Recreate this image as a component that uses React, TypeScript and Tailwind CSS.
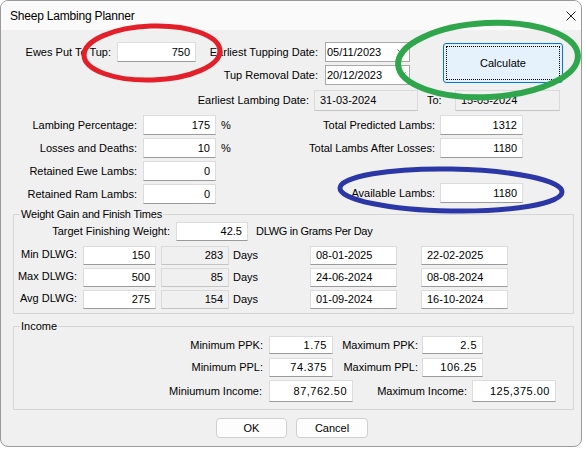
import React from "react";

const TB =
  "flex items-center justify-end pr-[5px] bg-white border border-[#dcdcdc] border-b-[#9a9a9a] text-[11px] leading-none shrink-0";
const TBL =
  "flex items-center justify-start pl-[5px] bg-white border border-[#dcdcdc] border-b-[#9a9a9a] text-[11px] leading-none shrink-0";
const GB =
  "flex items-center justify-end pr-[5px] bg-[#f0f0f0] border border-[#dadada] border-b-[#c4c4c4] text-[11px] leading-none shrink-0";
const GBL =
  "flex items-center justify-start pl-[5px] bg-[#f0f0f0] border border-[#dadada] border-b-[#c4c4c4] text-[11px] leading-none shrink-0";
const LB = "text-right text-[11px] leading-none shrink-0 whitespace-nowrap";

function DateBox({ value }: { value: string }) {
  return (
    <div className="ml-[7px] w-[85px] h-[20px] shrink-0 bg-white border border-[#a8a8a8] flex items-center justify-between pl-[1px] pr-[3px] text-[11px] leading-none">
      <span>{value}</span>
      <svg width="9" height="6" viewBox="0 0 9 6">
        <path d="M0.5 0.5 L4.5 4.5 L8.5 0.5" fill="none" stroke="#555" strokeWidth="1" />
      </svg>
    </div>
  );
}

function DlwgRow({
  label,
  v,
  days,
  d1,
  d2,
  first,
}: {
  label: string;
  v: string;
  days: string;
  d1: string;
  d2: string;
  first?: boolean;
}) {
  return (
    <div className={first ? "flex items-center h-[19px] mt-[5px]" : "flex items-center h-[19px] mt-[3px]"}>
      <span className={`${LB} w-[63px] -mt-[2px]`}>{label}</span>
      <div className={`${TB} ml-[6px] w-[73px] h-[19px]`}>{v}</div>
      <div className={`${GB} ml-[5px] w-[68px] h-[19px]`}>{days}</div>
      <span className="ml-[4px] w-[77px] shrink-0 text-[11px] leading-none">Days</span>
      <div className={`${TBL} w-[87px] h-[19px]`}>{d1}</div>
      <div className={`${TBL} ml-[24px] w-[87px] h-[19px]`}>{d2}</div>
    </div>
  );
}

export default function App() {
  return (
    <div className="w-[586px] h-[450px] bg-white font-['Liberation_Sans',Arial,sans-serif] text-black relative overflow-hidden">
      <div className="w-[582px] h-[447px] bg-[#f0f0f0] border border-[#9a9a9a] rounded-[8px] overflow-hidden flex flex-col">
        {/* Title bar */}
        <div className="h-[29px] shrink-0 bg-[#fafafa] flex items-center justify-between pl-[9px] pr-[5px]">
          <span className="text-[12px] leading-none tracking-[-0.2px]">Sheep Lambing Planner</span>
          <svg width="10" height="10" viewBox="0 0 10 10">
            <path d="M0.5 0.5 L9.5 9.5 M9.5 0.5 L0.5 9.5" stroke="#222" strokeWidth="1" />
          </svg>
        </div>

        {/* Rows A/B + Calculate */}
        <div className="flex mt-[12px]">
          <div className="flex flex-col w-[409px] shrink-0">
            <div className="flex items-center h-[20px]">
              <span className={`${LB} w-[110px]`}>Ewes Put To Tup:</span>
              <div className={`${TB} ml-[6px] w-[79px] h-[20px]`}>750</div>
              <span className={`${LB} w-[122px]`}>Earliest Tupping Date:</span>
              <DateBox value="05/11/2023" />
            </div>
            <div className="flex items-center h-[20px] mt-[3px]">
              <span className={`${LB} w-[317px]`}>Tup Removal Date:</span>
              <DateBox value="20/12/2023" />
            </div>
          </div>
          <button className="ml-[33px] mt-[1px] w-[120px] h-[40px] shrink-0 rounded-[3px] bg-[#e5f1fb] border border-[#0078d4] outline-1 outline-dotted outline-black outline-offset-[-4px] text-[11px] leading-none">
            Calculate
          </button>
        </div>

        {/* Row C */}
        <div className="flex items-center h-[21px] mt-[5px]">
          <span className={`${LB} w-[308px]`}>Earliest Lambing Date:</span>
          <div className={`${GBL} ml-[5px] w-[104px] h-[21px]`}>31-03-2024</div>
          <span className="ml-[9px] w-[28px] shrink-0 text-[11px] leading-none">To:</span>
          <div className={`${GBL} w-[105px] h-[21px]`}>15-05-2024</div>
        </div>

        {/* Rows D-G */}
        <div className="flex mt-[4px]">
          <div className="flex flex-col gap-[3px] w-[249px] shrink-0">
            <div className="flex items-center h-[20px]">
              <span className={`${LB} w-[136px]`}>Lambing Percentage:</span>
              <div className={`${TB} ml-[6px] w-[73px] h-[20px]`}>175</div>
              <span className="ml-[5px] text-[11px] leading-none">%</span>
            </div>
            <div className="flex items-center h-[20px]">
              <span className={`${LB} w-[136px]`}>Losses and Deaths:</span>
              <div className={`${TB} ml-[6px] w-[73px] h-[20px]`}>10</div>
              <span className="ml-[5px] text-[11px] leading-none">%</span>
            </div>
            <div className="flex items-center h-[20px]">
              <span className={`${LB} w-[136px]`}>Retained Ewe Lambs:</span>
              <div className={`${TB} ml-[6px] w-[73px] h-[20px]`}>0</div>
            </div>
            <div className="flex items-center h-[20px]">
              <span className={`${LB} w-[136px]`}>Retained Ram Lambs:</span>
              <div className={`${TB} ml-[6px] w-[73px] h-[20px]`}>0</div>
            </div>
          </div>
          <div className="flex flex-col">
            <div className="flex items-center h-[20px]">
              <span className={`${LB} w-[185px]`}>Total Predicted Lambs:</span>
              <div className={`${TB} ml-[5px] w-[83px] h-[20px]`}>1312</div>
            </div>
            <div className="flex items-center h-[20px] mt-[3px]">
              <span className={`${LB} w-[185px]`}>Total Lambs After Losses:</span>
              <div className={`${TB} ml-[5px] w-[83px] h-[20px]`}>1180</div>
            </div>
            <div className="flex items-center h-[20px] mt-[25px]">
              <span className={`${LB} w-[185px]`}>Available Lambs:</span>
              <div className={`${TB} ml-[5px] w-[83px] h-[20px]`}>1180</div>
            </div>
          </div>
        </div>

        {/* Weight Gain group */}
        <div className="mt-[10px] ml-[12px] w-[561px] h-[100px] shrink-0 border border-[#d6d6d6] flex flex-col">
          <span className="-mt-[8px] ml-[6px] px-[1px] self-start bg-[#f0f0f0] text-[11px] leading-[14px] tracking-[-0.2px]">
            Weight Gain and Finish Times
          </span>
          <div className="flex items-center h-[19px] mt-[1px]">
            <span className={`${LB} w-[156px]`}>Target Finishing Weight:</span>
            <div className={`${TB} ml-[6px] w-[72px] h-[19px]`}>42.5</div>
            <span className="ml-[8px] text-[11px] leading-none tracking-[-0.3px]">DLWG in Grams Per Day</span>
          </div>
          <DlwgRow first label="Min DLWG:" v="150" days="283" d1="08-01-2025" d2="22-02-2025" />
          <DlwgRow label="Max DLWG:" v="500" days="85" d1="24-06-2024" d2="08-08-2024" />
          <DlwgRow label="Avg DLWG:" v="275" days="154" d1="01-09-2024" d2="16-10-2024" />
        </div>

        {/* Income group */}
        <div className="mt-[12px] ml-[12px] w-[561px] h-[84px] shrink-0 border border-[#d6d6d6] flex flex-col">
          <span className="-mt-[8px] ml-[6px] px-[1px] self-start bg-[#f0f0f0] text-[11px] leading-[14px]">
            Income
          </span>
          <div className="flex items-center h-[18px] mt-[3px]">
            <span className={`${LB} w-[249px]`}>Minimum PPK:</span>
            <div className={`${TB} ml-[6px] w-[64px] h-[18px] tracking-[0.5px]`}>1.75</div>
            <span className={`${LB} w-[85px]`}>Maximum PPK:</span>
            <div className={`${TB} ml-[4px] w-[61px] h-[18px] tracking-[0.5px]`}>2.5</div>
          </div>
          <div className="flex items-center h-[19px] mt-[4px]">
            <span className={`${LB} w-[249px]`}>Minimum PPL:</span>
            <div className={`${TB} ml-[6px] w-[64px] h-[19px] tracking-[0.5px]`}>74.375</div>
            <span className={`${LB} w-[85px]`}>Maximum PPL:</span>
            <div className={`${TB} ml-[4px] w-[61px] h-[19px] tracking-[0.5px]`}>106.25</div>
          </div>
          <div className="flex items-center h-[22px] mt-[3px]">
            <span className={`${LB} w-[248px]`}>Miniumum Income:</span>
            <div className={`${TB} ml-[7px] w-[84px] h-[22px] tracking-[0.5px]`}>87,762.50</div>
            <span className={`${LB} w-[114px]`}>Maximum Income:</span>
            <div className={`${TB} ml-[5px] w-[84px] h-[22px] tracking-[0.5px]`}>125,375.00</div>
          </div>
        </div>

        {/* Buttons */}
        <div className="flex mt-[8px]">
          <button className="ml-[215px] w-[71px] h-[20px] rounded-[4px] border border-[#d0d0d0] bg-[#fdfdfd] text-[11px] leading-none">
            OK
          </button>
          <button className="ml-[9px] w-[72px] h-[20px] rounded-[4px] border border-[#d0d0d0] bg-[#fdfdfd] text-[11px] leading-none">
            Cancel
          </button>
        </div>
      </div>

      {/* Annotation ellipses drawn over the screenshot */}
      <svg className="absolute inset-0 pointer-events-none" width="586" height="450" viewBox="0 0 586 450">
        <ellipse cx="152" cy="53" rx="68" ry="27" fill="none" stroke="#e3202a" strokeWidth="5" transform="rotate(-2 152 53)" />
        <ellipse cx="488" cy="60" rx="90" ry="37" fill="none" stroke="#2fa64c" strokeWidth="6" transform="rotate(-3 488 60)" />
        <ellipse cx="451" cy="190" rx="111" ry="21" fill="none" stroke="#2b37a6" strokeWidth="5" transform="rotate(1 451 190)" />
      </svg>
    </div>
  );
}
